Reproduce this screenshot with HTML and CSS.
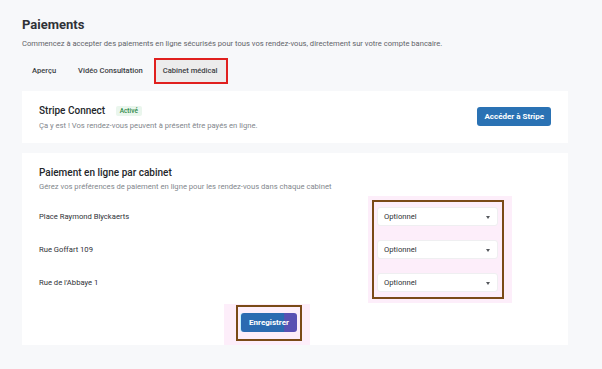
FILE: index.html
```html
<!DOCTYPE html>
<html lang="fr">
<head>
    <meta charset="UTF-8">
    <meta name="viewport" content="width=device-width, initial-scale=1.0">
    <title>Paiements</title>
    <link rel="stylesheet" href="styles.css">
</head>
<body>

<div class="page">
    <h1>Paiements</h1>
    <p class="lead">Commencez à accepter des paiements en ligne sécurisés pour tous vos rendez-vous, directement sur votre compte bancaire.</p>

    <nav class="tabs">
        <span class="tab">Aperçu</span>
        <span class="tab">Vidéo Consultation</span>
        <span class="tab active">Cabinet médical</span>
    </nav>

    <section class="card stripe">
        <div>
            <h2>Stripe Connect <span class="badge">Activé</span></h2>
            <p class="muted">Ça y est ! Vos rendez-vous peuvent à présent être payés en ligne.</p>
        </div>
        <button type="button" class="btn">Accéder à Stripe</button>
    </section>

    <section class="card cabinets">
        <h2>Paiement en ligne par cabinet</h2>
        <p class="muted">Gérez vos préférences de paiement en ligne pour les rendez-vous dans chaque cabinet</p>

        <div class="rows">
            <ul class="labels">
                <li>Place Raymond Blyckaerts</li>
                <li>Rue Goffart 109</li>
                <li>Rue de l'Abbaye 1</li>
            </ul>
            <div class="mark">
                <div class="mark-box selects">
                    <div class="select">Optionnel <span class="caret"></span></div>
                    <div class="select">Optionnel <span class="caret"></span></div>
                    <div class="select">Optionnel <span class="caret"></span></div>
                </div>
            </div>
        </div>

        <div class="mark footer">
            <div class="mark-box">
                <button type="button" class="btn save">Enregistrer</button>
            </div>
        </div>
    </section>
</div>

</body>
</html>
```

FILE: styles.css
```css
* {
    box-sizing: border-box;
}
body {
    margin: 0;
    font-family: Roboto, "Liberation Sans", sans-serif;
    background: #f7f8fa;
    color: #2f3237;
}
.page {
    padding: 16px 34px 24px 22px;
}
h1 {
    margin: 0;
    font-size: 13px;
    line-height: 18px;
    font-weight: 700;
}
.lead {
    margin: 4px 0 0;
    font-size: 7.6px;
    line-height: 12px;
    color: #5f6369;
}
.tabs {
    display: flex;
    gap: 2px;
    margin-top: 8px;
}
.tab {
    height: 26px;
    line-height: 26px;
    padding: 0 10px;
    font-size: 7.6px;
    font-weight: 500;
    color: #3c3f44;
}
.tab.active {
    margin-left: -1px;
    padding: 0 8px 0 7px;
    background: #ececec;
    border: 2px solid #e0201e; /* annotation frame */
    line-height: 22px;
}
.card {
    background: #fff;
    padding: 0 17px;
}
.card h2 {
    margin: 0;
    font-size: 10px;
    line-height: 14px;
    font-weight: 500;
    color: #24272b;
}
.muted {
    margin: 1px 0 0;
    font-size: 7.65px;
    line-height: 12px;
    color: #83878d;
}
.stripe {
    margin-top: 7px;
    height: 52px;
    display: flex;
    align-items: flex-start;
    justify-content: space-between;
    padding-top: 13px;
}
.stripe .muted {
    margin-top: 2px;
}
.badge {
    display: inline-block;
    margin-left: 8px;
    padding: 0 4px;
    font-size: 6.5px;
    line-height: 10px;
    font-weight: 500;
    vertical-align: 1px;
    color: #2e8a49;
    background: #eaf6ed;
    border-radius: 2px;
}
.btn {
    font-family: inherit;
    font-size: 8px;
    font-weight: 700;
    color: #fff;
    background: #2a72b4;
    border: none;
    border-radius: 3px;
    height: 19px;
    padding: 0 7px;
}
.stripe .btn {
    margin-top: 3px;
}
.cabinets {
    margin-top: 10px;
    padding-top: 13px;
}
.rows {
    display: flex;
    justify-content: space-between;
    margin-top: 3px;
}
.labels {
    list-style: none;
    margin: 0;
    padding: 11px 0 0;
    display: flex;
    flex-direction: column;
    gap: 14px;
}
.labels li {
    height: 19px;
    line-height: 19px;
    font-size: 7.65px;
    color: #2f3237;
}
.mark {
    background: #fdeefa;
    padding: 4px 8px 4px 4px;
    margin-right: 39px;
}
.mark-box {
    border: 2px solid #7a4a17;
}
.selects {
    display: flex;
    flex-direction: column;
    gap: 14px;
    padding: 5px 4px 5px 3px;
}
.select {
    position: relative;
    width: 121px;
    height: 19px;
    line-height: 17px;
    padding-left: 6px;
    font-size: 7.65px;
    color: #2f3237;
    background: #fff;
    border: 1px solid #efeff1;
    border-radius: 3px;
}
.caret {
    position: absolute;
    right: 7px;
    top: 8px;
    border-left: 2.5px solid transparent;
    border-right: 2.5px solid transparent;
    border-top: 3px solid #55585d;
}
.footer {
    display: flex;
    width: max-content;
    margin: 1px 0 0 185px;
    padding: 1px 8px 4px 12px;
}
.footer .mark-box {
    display: flex;
    padding: 6px 3px 7px;
}
.save {
    width: 56px;
    padding: 0;
    background: linear-gradient(to right, #2b6bb1 0, #2b6bb1 76%, #5950b3 78%, #5950b3 100%);
    box-shadow: -1px 0 0 #c6f4ff;
}
```
